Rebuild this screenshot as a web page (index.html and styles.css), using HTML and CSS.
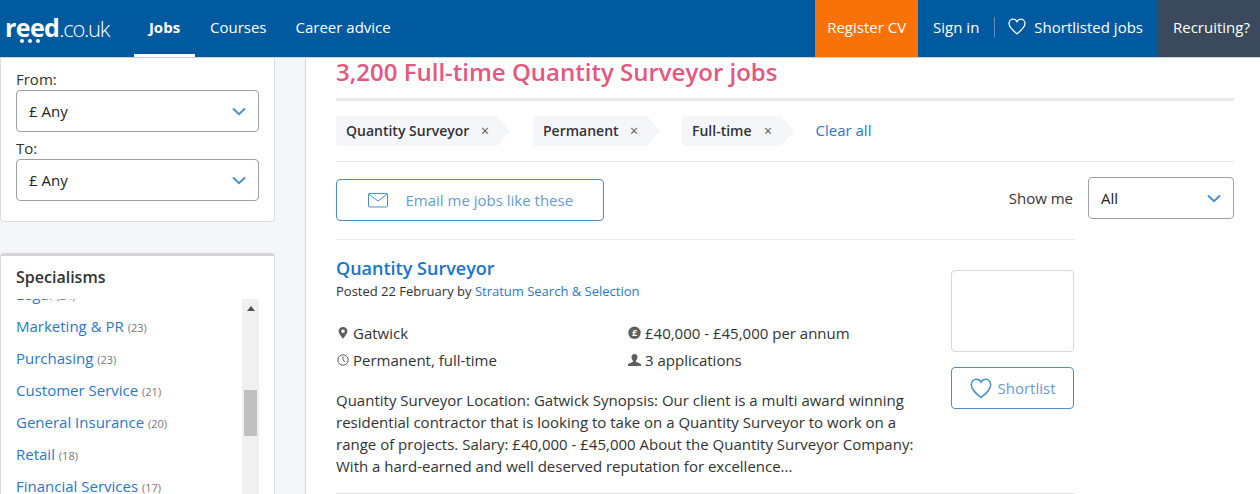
FILE: index.html
```html
<!DOCTYPE html>
<html lang="en">
<head>
<meta charset="utf-8">
<title>Quantity Surveyor jobs</title>
<link rel="stylesheet" href="styles.css">
</head>
<body>
<header class="topbar">
  <a class="logo"><span class="logo-main">reed</span><span class="logo-rest">.co.uk</span><span class="logo-dots"><i></i><i></i><i></i></span></a>
  <nav class="nav">
    <a class="nav-item active">Jobs</a>
    <a class="nav-item">Courses</a>
    <a class="nav-item">Career advice</a>
  </nav>
  <div class="actions">
    <a class="register">Register CV</a>
    <a class="signin">Sign in</a>
    <a class="shortlisted">
      <svg class="heart-small" viewBox="0 0 18 17"><path d="M9 15.800C5.500 13 1 9.600 1 5.600 1 3 3 1.200 5.200 1.200 6.800 1.200 8.200 2 9 3.600 9.800 2 11.200 1.200 12.800 1.200 15 1.200 17 3 17 5.600 17 9.600 12.500 13 9 15.800Z"/></svg>
      Shortlisted jobs</a>
    <a class="recruiting">Recruiting?</a>
  </div>
</header>
<div class="page">
  <aside class="sidebar">
    <section class="card salary">
      <label class="field-label">From:</label>
      <div class="select"><span>£ Any</span><svg class="chev" viewBox="0 0 14 9"><path d="M1 1.500 7 7.200 13 1.500"/></svg></div>
      <label class="field-label to">To:</label>
      <div class="select"><span>£ Any</span><svg class="chev" viewBox="0 0 14 9"><path d="M1 1.500 7 7.200 13 1.500"/></svg></div>
    </section>
    <section class="card specialisms">
      <h3>Specialisms</h3>
      <div class="list-wrap">
        <ul class="list">
          <li><a>Legal</a> <small>(24)</small></li>
          <li><a>Marketing &amp; PR</a> <small>(23)</small></li>
          <li><a>Purchasing</a> <small>(23)</small></li>
          <li><a>Customer Service</a> <small>(21)</small></li>
          <li><a>General Insurance</a> <small>(20)</small></li>
          <li><a>Retail</a> <small>(18)</small></li>
          <li><a>Financial Services</a> <small>(17)</small></li>
        </ul>
        <div class="scrollbar"><span class="arrow"></span><span class="thumb"></span></div>
      </div>
    </section>
  </aside>
  <main class="main">
    <h1 class="title">3,200 Full-time Quantity Surveyor jobs</h1>
    <div class="tags">
      <span class="tag tag-a">Quantity Surveyor <b>×</b></span>
      <span class="tag tag-b">Permanent <b>×</b></span>
      <span class="tag tag-c">Full-time <b>×</b></span>
      <a class="clear">Clear all</a>
    </div>
    <div class="tools">
      <a class="email-btn">
        <svg class="mail" viewBox="0 0 20 15"><rect x=".5" y=".5" width="19" height="13.500" rx="1"/><path d="M.8 1 10 8 19.200 1"/></svg>
        Email me jobs like these</a>
      <div class="show">
        <span>Show me</span>
        <div class="select select-all"><span>All</span><svg class="chev" viewBox="0 0 14 9"><path d="M1 1.500 7 7.200 13 1.500"/></svg></div>
      </div>
    </div>
    <article class="job">
      <div class="job-body">
        <h2 class="job-title">Quantity Surveyor</h2>
        <p class="posted">Posted 22 February by <a>Stratum Search &amp; Selection</a></p>
        <div class="meta">
          <div class="meta-item"><svg class="ico" viewBox="0 0 13 14"><path class="fill" d="M7 1C4.500 1 2.600 2.900 2.600 5.300 2.600 8 7 12.800 7 12.800S11.400 8 11.400 5.300C11.400 2.900 9.500 1 7 1Zm0 6.100a1.800 1.800 0 1 1 0-3.600 1.800 1.800 0 0 1 0 3.600Z"/></svg>Gatwick</div>
          <div class="meta-item"><svg class="ico" viewBox="0 0 13 14"><circle class="fill" cx="6.500" cy="6.800" r="6.200"/><text x="6.500" y="10.300" class="pound">£</text></svg>£40,000 - £45,000 per annum</div>
          <div class="meta-item"><svg class="ico" viewBox="0 0 13 14"><circle class="line" cx="7" cy="7" r="5.200"/><path class="line" d="M7 3.500V7.300L9.300 9"/></svg>Permanent, full-time</div>
          <div class="meta-item"><svg class="ico" viewBox="0 0 13 14"><path class="fill" d="M6.500 1c2 0 3 1.400 3 3.100S8.400 7.500 8 7.900V8.800L13 11V13H0V11L5 8.800V7.900C4.600 7.500 3.500 5.800 3.500 4.100S4.500 1 6.500 1Z"/></svg>3 applications</div>
        </div>
        <p class="desc">Quantity Surveyor Location: Gatwick Synopsis: Our client is a multi award winning residential contractor that is looking to take on a Quantity Surveyor to work on a range of projects. Salary: £40,000 - £45,000 About the Quantity Surveyor Company: With a hard-earned and well deserved reputation for excellence...</p>
      </div>
      <div class="job-side">
        <div class="logo-box"></div>
        <a class="shortlist-btn"><svg class="heart" viewBox="0 0 22 21"><path d="M11 19.500C6.500 16 1.300 12 1.300 6.800 1.300 3.600 3.700 1.300 6.500 1.300 8.500 1.300 10.100 2.400 11 4.300 11.900 2.400 13.500 1.300 15.500 1.300 18.300 1.300 20.700 3.600 20.700 6.800 20.700 12 15.500 16 11 19.500Z"/></svg>Shortlist</a>
      </div>
    </article>
  </main>
</div>
</body>
</html>
```
FILE: styles.css
```css
* { box-sizing: border-box; }
html, body { margin: 0; height: 494px; overflow: hidden; }
body { font-family: "Open Sans", sans-serif; color: #333; background: #fff; font-size: 15px; }
a { text-decoration: none; cursor: pointer; }
p, h1, h2, h3, ul { margin: 0; padding: 0; }

.topbar { display: flex; height: 58px; background: #005aa0; border-bottom: 1px solid #d0d0d0; color: #fff; }
.logo { position: relative; display: flex; align-items: baseline; width: 134px; padding: 9px 0 0 5px; color: #fff; }
.logo-main { font-weight: 700; font-size: 25px; letter-spacing: -.6px; line-height: 36px; }
.logo-rest { font-weight: 300; font-size: 22px; letter-spacing: -1.300px; }
.logo-dots { position: absolute; left: 20px; top: 39px; display: flex; gap: 4px; }
.logo-dots i { width: 4px; height: 4px; border-radius: 50%; background: #fff; }
.nav { display: flex; }
.nav-item { display: flex; align-items: center; padding: 0 14.500px 4px; color: #fff; height: 57px; }
.nav-item.active { font-weight: 700; border-bottom: 3px solid #fff; width: 61px; padding: 0 0 1px; justify-content: center; margin-right: .5px; }
.actions { display: flex; margin-left: auto; height: 57px; align-items: stretch; }
.actions a { display: flex; align-items: center; color: #fff; padding-bottom: 4px; }
.actions .register { background: #f7730a; width: 103px; justify-content: center; }
.actions .signin { padding: 0 16px 4px 15px; position: relative; }
.signin::after { content: ""; position: absolute; right: 0; top: 17px; height: 20px; width: 1px; background: #5c8fbd; }
.actions .shortlisted { padding: 0 15px 4px 13px; gap: 8px; }
.heart-small { width: 18px; height: 17px; }
.heart-small path { fill: none; stroke: #fff; stroke-width: 1.300; }
.actions .recruiting { background: #3a4a5c; width: 102px; padding: 0 0 4px 15px; white-space: nowrap; }

.page { display: flex; height: 436px; }
.sidebar { width: 306px; flex: none; background: #f5f6fa; border-right: 1px solid #d5d7db; padding-right: 30px; overflow: hidden; }
.card { background: #fff; border: 1px solid #dcdcdc; border-radius: 0 0 4px 4px; }
.salary { height: 164px; padding: 11px 15px 0; border-top: 0; }
.field-label { display: block; line-height: 20px; margin-bottom: 1px; }
.field-label.to { margin-top: 6px; }
.select { display: flex; align-items: center; justify-content: space-between; height: 42px; border: 1px solid #a0a0a0; border-radius: 4px; background: #fff; padding: 0 12px; color: #222; }
.chev { width: 14px; height: 9px; }
.chev path { fill: none; stroke: #4a90c8; stroke-width: 2; }
.specialisms { margin-top: 31px; height: 260px; border-top: 3px solid #d3d3d3; border-radius: 4px 4px 0 0; padding: 10px 15px 0; }
.specialisms h3 { font-size: 16px; font-weight: 600; line-height: 22px; color: #333; margin-bottom: 11px; }
.list-wrap { display: flex; height: 200px; overflow: hidden; }
.list { flex: 1; list-style: none; margin-top: -21px; }
.list li { height: 32px; line-height: 32px; white-space: nowrap; }
.list a { color: #2a78cc; }
.list small { color: #777; font-size: 11px; }
.scrollbar { position: relative; width: 17px; background: #f0f0f0; height: 200px; }
.arrow { position: absolute; left: 5px; top: 7px; border: 4px solid transparent; border-top: 0; border-bottom: 5px solid #505050; }
.thumb { position: absolute; left: 2px; top: 91px; width: 13px; height: 46px; background: #bfbfbf; }

.main { flex: 1; min-width: 0; padding: 0 26px 0 30px; }
.title { font-size: 24px; font-weight: 600; color: #e4587f; line-height: 28px; border-bottom: 3px solid #e9e9e9; height: 43px; }
.tags { display: flex; align-items: center; height: 61px; border-bottom: 1px solid #e9e9e9; }
.tag { position: relative; display: flex; align-items: center; justify-content: space-between; height: 30px; background: #f5f6fa; border-radius: 3px 0 0 3px; padding: 0 9px 2px 10px; margin-right: 35px; font-size: 14px; font-weight: 600; white-space: nowrap; }
.tag-a { width: 161px; margin-right: 36px; padding-right: 8px; }
.tag-b { width: 114px; }
.tag-c { width: 99px; }
.tag::after { content: ""; position: absolute; right: -13px; top: 0; border-left: 13px solid #f5f6fa; border-top: 15px solid transparent; border-bottom: 15px solid transparent; }
.tag b { font-weight: 400; color: #555; font-size: 14px; }
.clear { color: #2a78cc; padding-bottom: 2px; margin-left: -.5px; }
.tools { display: flex; justify-content: space-between; height: 77px; padding-top: 15px; align-items: flex-start; }
.email-btn { display: flex; align-items: center; margin-top: 2px; width: 268px; height: 42px; border: 1px solid #4a90c8; border-radius: 4px; padding-left: 31px; gap: 17.500px; color: #6a9ccf; }
.mail { width: 20px; height: 15px; }
.mail rect, .mail path { fill: none; stroke: #4a90c8; stroke-width: 1; }
.show { display: flex; align-items: center; gap: 15px; }
.select-all { width: 146px; height: 42px; }
.job { display: flex; justify-content: space-between; width: 739px; border-top: 1px solid #e9e9e9; padding-top: 16px; border-bottom: 1px solid #ddd; height: 255px; }
.job-body { width: 585px; }
.job-title { font-size: 18px; font-weight: 600; line-height: 24px; color: #1a73d0; }
.posted { font-size: 13px; line-height: 20px; margin-top: 1px; }
.posted a { color: #2a78cc; }
.meta { display: grid; grid-template-columns: 292px 1fr; row-gap: 5px; margin-top: 21px; }
.meta-item { display: flex; align-items: center; line-height: 22px; gap: 4px; }
.ico { width: 13px; height: 14px; }
.fill { fill: #5f5f5f; }
.line { fill: none; stroke: #5f5f5f; stroke-width: 1; }
.pound { fill: #fff; font-size: 9px; font-weight: 700; text-anchor: middle; font-family: "Open Sans", sans-serif; }
.desc { line-height: 22px; margin-top: 18px; }
.job-side { width: 123px; margin-right: 1px; padding-top: 14px; }
.logo-box { height: 82px; border: 1px solid #d8d8d8; border-radius: 4px; }
.shortlist-btn { display: flex; align-items: center; justify-content: center; margin-top: 15px; height: 42px; border: 1px solid #4a90c8; border-radius: 4px; color: #6a9ccf; gap: 6px; }
.heart { width: 22px; height: 21px; }
.heart path { fill: none; stroke: #4a90c8; stroke-width: 1.500; }
```
